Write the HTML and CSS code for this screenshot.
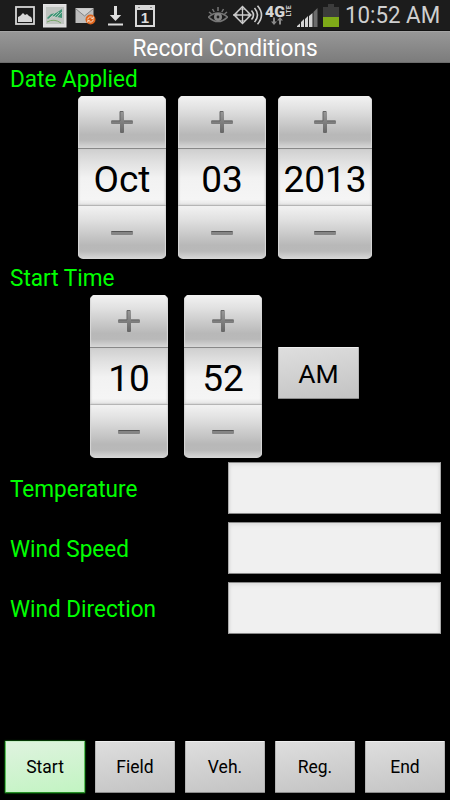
FILE: index.html
```html
<!DOCTYPE html>
<html lang="en">
<head>
  <meta charset="UTF-8">
  <meta name="viewport" content="width=device-width, initial-scale=1.0">
  <title>Record Conditions</title>
  <link rel="stylesheet" href="styles.css">
</head>
<body>
  <svg class="symbols" width="0" height="0">
    <defs>
      <linearGradient id="glyph" x1="0" y1="0" x2="0" y2="1">
        <stop offset="0" stop-color="#999"></stop>
        <stop offset="1" stop-color="#666"></stop>
      </linearGradient>
    </defs>
    <symbol id="plus" viewBox="0 0 24 24">
      <path d="M11 1h2q1 0 1 1v8.500h8q1 0 1 1v1.500q0 1-1 1h-8V22q0 1-1 1h-2q-1 0-1-1v-8H2q-1 0-1-1v-1.500q0-1 1-1h8V2q0-1 1-1z" fill="url(#glyph)"></path>
      <path d="M1.500 11h8.500V1.500h3M14 11h8.500" fill="none" stroke="#666" stroke-width="1"></path>
    </symbol>
    <symbol id="minus" viewBox="0 0 24 24">
      <rect x="1" y="10" width="22" height="4" rx="1" fill="#858585"></rect>
      <path d="M1.500 10.500h21" stroke="#555" stroke-width="1"></path>
    </symbol>
  </svg>

  <div class="status-bar">
    <div class="notifications">
      <svg width="20" height="19" viewBox="0 0 20 19">
        <rect x="1" y="1" width="18" height="17" fill="#1c1c1c" stroke="#d5d5d5" stroke-width="1.800"></rect>
        <path d="M3 16v-5l2-1 3-3 2 2 2-1 2 2 2 1 1 2v3z" fill="#d8d8d8"></path>
      </svg>
      <svg width="24" height="24" viewBox="0 0 24 24">
        <rect x="0.500" y="0.500" width="22.500" height="22.500" fill="#ddd" stroke="#e5e5e5"></rect>
        <rect x="3" y="3" width="18" height="17" fill="#bfc4c0"></rect>
        <path d="M4 14l4-4 5-1 6-4v9l-5-1-5-1-4 3z" fill="#419778"></path>
        <path d="M7 14l5-5M10 14l6-6M14 13l5-5" fill="none" stroke="#cfdcd4" stroke-width="0.700"></path>
        <path d="M4 18q7-4 14 1" fill="none" stroke="#78a868"></path>
      </svg>
      <svg width="21" height="18" viewBox="0 0 21 18">
        <rect x="0.500" y="1" width="18" height="15" fill="#bcbcbc"></rect>
        <path d="M1 1.500h17l-8.500 7z" fill="#d0d0d0"></path>
        <path d="M1 2l8.500 7L18 2" fill="none" stroke="#888"></path>
        <circle cx="15.500" cy="12.500" r="5" fill="#df651c"></circle>
        <path d="M12.700 12.500a2.800 2.800 0 0 1 5-1.500M18.300 12.500a2.800 2.800 0 0 1-5 1.500M18.300 9.500v2h-2M12.700 15.500v-2h2" fill="none" stroke="#f5d8c2"></path>
      </svg>
      <svg width="15" height="22" viewBox="0 0 15 22">
        <path d="M6 1h3v9h4.200L7.500 16 1.800 10H6zM0 18.500h15v2H0z" fill="#dedede"></path>
      </svg>
      <svg width="20" height="22" viewBox="0 0 20 22">
        <rect x="0" y="0" width="20" height="22" fill="#d8d8d8"></rect>
        <rect x="2" y="5" width="16" height="15" fill="#1c1c1c"></rect>
        <path d="M3 2.500h2M15 2.500h2" stroke="#888"></path>
        <text x="10" y="18" class="calendar-day">1</text>
      </svg>
    </div>
    <div class="indicators">
      <svg class="eye" width="20" height="18" viewBox="0 0 20 18">
        <path d="M0.500 11Q10 3 19.500 11 10 20 0.500 11z" fill="none" stroke="#777" stroke-width="1.600"></path>
        <circle cx="10" cy="11" r="4" fill="#858585"></circle>
        <circle cx="10" cy="11" r="1.400" fill="#222"></circle>
        <path d="M10 1v4M4.500 3l1.700 3M15.500 3l-1.700 3M1 6l2.500 2M19 6l-2.500 2" stroke="#777" stroke-width="1.500"></path>
      </svg>
      <svg class="gps" width="30" height="20" viewBox="0 0 30 20">
        <path d="M1 10l8.500-8.500L18 10l-8.500 8.500zM0 10h18M9.500 1v18" fill="none" stroke="#ccc" stroke-width="1.300"></path>
        <circle cx="9.500" cy="10" r="6" fill="none" stroke="#ccc" stroke-width="0.800"></circle>
        <path d="M18.500 5.500q4 4.500 0 9M21.500 3q6 7 0 14M24.500 0.800q8 9.200 0 18.400" fill="none" stroke="#ccc" stroke-width="1.600"></path>
      </svg>
      <svg class="network" width="27" height="22" viewBox="0 0 27 22">
        <text x="0" y="12.500" class="network-name" textLength="20" lengthAdjust="spacingAndGlyphs">4G</text>
        <text class="network-type" transform="translate(25.500 12.500) rotate(-90)" textLength="11" lengthAdjust="spacingAndGlyphs">LTE</text>
        <path d="M8 13.500h2v4h2l-3 3.500-3-3.500h2zM14 20.500h2v-4h2L15 13l-3 3.500h2z" fill="#8a8a8a"></path>
      </svg>
      <svg class="signal" width="23" height="21" viewBox="0 0 23 21">
        <path d="M1 20v-1l3-2.500V20zM5 20v-5l3-3v8zM9 20v-8l3-3v11zM13 20V9l3.500-3v14z" fill="#d4d4d4"></path>
        <path d="M17.500 20V5L21.500 1v19z" fill="#6c6c6c"></path>
      </svg>
      <svg class="battery" width="16" height="23" viewBox="0 0 16 23">
        <path d="M0 3h5V0h6v3h5v10H0z" fill="#3c3c3c"></path>
        <rect y="13" width="16" height="10" fill="#7eaa18"></rect>
      </svg>
      <span class="clock">10:52 AM</span>
    </div>
  </div>

  <div class="title-bar"><span class="title">Record Conditions</span></div>

  <div class="content">
    <div class="label"><span>Date Applied</span></div>
    <div class="date-picker">
      <div class="picker">
        <div class="step step-up"><svg><use href="#plus"></use></svg></div>
        <div class="value">Oct</div>
        <div class="step step-down"><svg><use href="#minus"></use></svg></div>
      </div>
      <div class="picker">
        <div class="step step-up"><svg><use href="#plus"></use></svg></div>
        <div class="value">03</div>
        <div class="step step-down"><svg><use href="#minus"></use></svg></div>
      </div>
      <div class="picker picker-year">
        <div class="step step-up"><svg><use href="#plus"></use></svg></div>
        <div class="value">2013</div>
        <div class="step step-down"><svg><use href="#minus"></use></svg></div>
      </div>
    </div>

    <div class="label label-time"><span>Start Time</span></div>
    <div class="time-picker">
      <div class="picker">
        <div class="step step-up"><svg><use href="#plus"></use></svg></div>
        <div class="value">10</div>
        <div class="step step-down"><svg><use href="#minus"></use></svg></div>
      </div>
      <div class="picker">
        <div class="step step-up"><svg><use href="#plus"></use></svg></div>
        <div class="value">52</div>
        <div class="step step-down"><svg><use href="#minus"></use></svg></div>
      </div>
      <button class="btn btn-ampm">AM</button>
    </div>

    <div class="fields">
      <label class="field"><span>Temperature</span><input type="text"></label>
      <label class="field"><span>Wind Speed</span><input type="text"></label>
      <label class="field"><span>Wind Direction</span><input type="text"></label>
    </div>
  </div>

  <div class="tabs">
    <button class="btn active">Start</button>
    <button class="btn">Field</button>
    <button class="btn">Veh.</button>
    <button class="btn">Reg.</button>
    <button class="btn">End</button>
  </div>
</body>
</html>
```
FILE: styles.css
```css
* {
  box-sizing: border-box;
}

body {
  margin: 0;
  height: 800px;
  display: flex;
  flex-direction: column;
  overflow: hidden;
  background: #000;
  color: #000;
  font-family: Roboto, sans-serif;
}

svg {
  display: block;
  flex: none;
}

.symbols {
  position: absolute;
}

/* status bar */
.status-bar {
  height: 31px;
  flex: none;
  display: flex;
  align-items: center;
  justify-content: space-between;
  padding: 0 5px 0 15px;
  background: #1c1c1c;
  border-bottom: 1px solid #111;
}

.notifications {
  display: flex;
  align-items: center;
  gap: 8px;
  padding-top: 1px;
}

.notifications svg:nth-child(4) {
  margin: 0 4px;
}

.calendar-day {
  font-family: "Liberation Sans", sans-serif;
  font-size: 15px;
  font-weight: 700;
  text-anchor: middle;
  fill: #ddd;
}

.indicators {
  display: flex;
  align-items: center;
}

.gps {
  margin-left: 5px;
}

.network {
  margin-left: 2px;
}

.network-name {
  font-size: 14px;
  font-weight: 900;
  fill: #d5d5d5;
}

.network-type {
  font-size: 6.5px;
  font-weight: 700;
  fill: #ccc;
}

.signal {
  margin-left: 4px;
  margin-top: 4px;
}

.battery {
  margin-left: 4px;
  margin-top: 1px;
}

.clock {
  width: 100px;
  margin-left: 6px;
  color: #cfcfcf;
  font-size: 24px;
  line-height: 30px;
  white-space: nowrap;
  transform: scaleX(0.93);
  transform-origin: left;
}

/* title */
.title-bar {
  height: 32px;
  flex: none;
  text-align: center;
  background: linear-gradient(#979797, #7c7c7c);
  border-top: 1px solid #a5a5a5;
  border-bottom: 1px solid #6c6c6c;
}

.title {
  display: inline-block;
  color: #fff;
  font-size: 24px;
  line-height: 32px;
  transform: scaleX(0.945);
}

.content {
  flex: 1;
}

.label,
.field {
  color: #0f0;
  font-size: 24px;
}

.label span,
.field span {
  display: inline-block;
  transform: scaleX(0.94);
  transform-origin: left;
}

.label {
  height: 33px;
  padding-left: 10px;
  line-height: 32px;
}

.label-time {
  height: 36px;
  line-height: 38px;
}

/* pickers */
.date-picker {
  display: flex;
  gap: 12px;
  padding-left: 78px;
}

.time-picker {
  display: flex;
  align-items: center;
  gap: 16px;
  padding-left: 90px;
}

.picker {
  width: 88px;
  height: 163px;
  display: flex;
  flex-direction: column;
  border-radius: 5px;
  overflow: hidden;
}

.picker-year {
  width: 94px;
}

.time-picker .picker {
  width: 78px;
}

.step {
  display: flex;
  align-items: center;
  justify-content: center;
  background: linear-gradient(#f2f2f2, #e2e2e2 24%, #b8b8b8 74%, #b9b9b9 85%, #d8d8d8);
  box-shadow: inset 1px 0 1px #d8d8d8, inset -1px 0 1px #d8d8d8, inset 0 1px #f8f8f8;
}

.step svg {
  width: 24px;
  height: 24px;
}

.step-up {
  height: 52px;
}

.step-down {
  height: 53px;
}

.value {
  height: 58px;
  border-top: 1px solid #888;
  border-bottom: 1px solid #b5b5b5;
  background: linear-gradient(#cfcfcf, #e1e1e1 24%, #f2f2f2 52%, #f5f5f5 90%, #e5e5e5);
  box-shadow: inset 1px 0 2px #ccc, inset -1px 0 2px #ccc;
  font-size: 37px;
  line-height: 61px;
  text-align: center;
}

/* buttons */
.btn {
  height: 52px;
  padding: 0;
  border: 1px solid #b5b5b5;
  border-top-color: #eee;
  border-bottom-color: #8b8b8b;
  border-radius: 1px;
  background: linear-gradient(170deg, #dedede, #c3c3c3);
  color: #000;
  font-family: inherit;
  font-size: 17.5px;
}

.btn-ampm {
  width: 81px;
  margin-bottom: 7px;
  font-size: 26.5px;
}

/* fields */
.fields {
  display: flex;
  flex-direction: column;
  gap: 8px;
  padding: 4px 9px 0 10px;
}

.field {
  display: flex;
  align-items: center;
  justify-content: space-between;
}

.field span {
  padding-top: 2px;
}

.field input {
  width: 213px;
  height: 52px;
  border: 1px solid #aaa;
  border-top-color: #888;
  border-bottom-color: #888;
  background: #f0f0f0;
  box-shadow: inset 0 3px 4px -1px #ddd, inset 2px 0 3px -1px #ddd, inset -2px 0 3px -1px #ddd;
}

/* bottom tabs */
.tabs {
  display: grid;
  grid-template-columns: repeat(5, 80px);
  gap: 10px;
  padding: 0 5px 7px;
}

.active {
  border-color: #5cc35c;
  border-top-color: #c8eec8;
  border-bottom-color: #279227;
  background: linear-gradient(170deg, #dff3df, #c2f4c2);
  box-shadow: 0 0 1px 1px #053f05;
}
```
